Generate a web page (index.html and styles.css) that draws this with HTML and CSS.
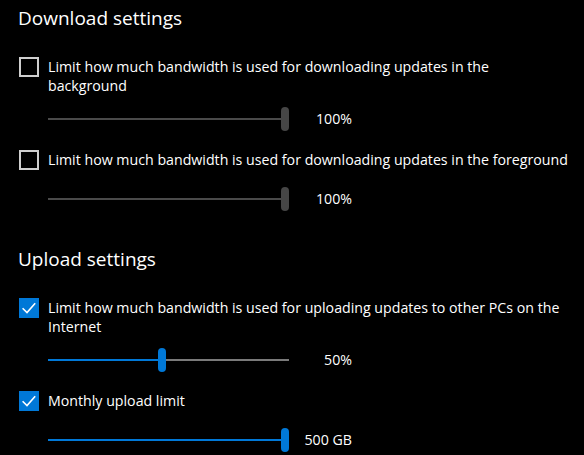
FILE: index.html
```html
<!DOCTYPE html>
<html lang="en">
<head>
<meta charset="utf-8">
<title>Delivery Optimization - Advanced options</title>
<link rel="stylesheet" href="styles.css">
</head>
<body>
<main class="page">
  <section class="section">
    <h2 class="heading">Download settings</h2>

    <label class="check-row">
      <span class="box"></span>
      <span class="check-text">Limit how much bandwidth is used for downloading updates in the<br>background</span>
    </label>
    <div class="slider-row">
      <div class="slider disabled">
        <div class="track"></div>
        <div class="thumb" style="left:233px"></div>
      </div>
      <span class="value">100%</span>
    </div>

    <label class="check-row">
      <span class="box"></span>
      <span class="check-text">Limit how much bandwidth is used for downloading updates in the foreground</span>
    </label>
    <div class="slider-row">
      <div class="slider disabled">
        <div class="track"></div>
        <div class="thumb" style="left:233px"></div>
      </div>
      <span class="value">100%</span>
    </div>
  </section>

  <section class="section">
    <h2 class="heading">Upload settings</h2>

    <label class="check-row">
      <span class="box checked">
        <svg viewBox="0 0 20 20" width="20" height="20"><path d="M3.6 10.2 L8 14.6 L16.2 5.2" fill="none" stroke="#fff" stroke-width="1.6"/></svg>
      </span>
      <span class="check-text">Limit how much bandwidth is used for uploading updates to other PCs on the<br>Internet</span>
    </label>
    <div class="slider-row">
      <div class="slider">
        <div class="track"></div>
        <div class="fill" style="width:114px"></div>
        <div class="thumb" style="left:110px"></div>
      </div>
      <span class="value">50%</span>
    </div>

    <label class="check-row">
      <span class="box checked">
        <svg viewBox="0 0 20 20" width="20" height="20"><path d="M3.6 10.2 L8 14.6 L16.2 5.2" fill="none" stroke="#fff" stroke-width="1.6"/></svg>
      </span>
      <span class="check-text">Monthly upload limit</span>
    </label>
    <div class="slider-row">
      <div class="slider">
        <div class="track"></div>
        <div class="fill" style="width:237px"></div>
        <div class="thumb" style="left:233px"></div>
      </div>
      <span class="value">500 GB</span>
    </div>
  </section>
</main>
</body>
</html>
```

FILE: styles.css
```css
html, body {
  margin: 0;
  padding: 0;
  background: #000;
  color: #fff;
  font-family: "Open Sans", "Noto Sans", "Liberation Sans", sans-serif;
}

.page {
  padding: 4px 0 0 18px;
  display: flex;
  flex-direction: column;
}

.section {
  display: flex;
  flex-direction: column;
}

.section + .section {
  margin-top: 34px;
}

.heading {
  margin: 0 0 25px 0;
  font-size: 19px;
  line-height: 28px;
  font-weight: 400;
}

.check-row {
  display: flex;
  align-items: flex-start;
  gap: 9px;
  min-height: 37px;
  padding-bottom: 12px;
  box-sizing: border-box;
  padding-left: 1px;
}

.box {
  flex: none;
  width: 20px;
  height: 20px;
  box-sizing: border-box;
  border: 2px solid #cfcfcf;
  display: flex;
  align-items: center;
  justify-content: center;
}

.box.checked {
  border: none;
  background: #0078d7;
}

.box svg {
  display: block;
}

.check-text {
  font-size: 14.2px;
  line-height: 19px;
  white-space: nowrap;
}

.slider-row {
  display: flex;
  align-items: center;
  height: 24px;
  margin-left: 30px;
  margin-bottom: 19px;
}

.section .slider-row:last-child {
  margin-bottom: 0;
}

.slider {
  position: relative;
  width: 241px;
  height: 24px;
  flex: none;
}

.track {
  position: absolute;
  left: 0;
  right: 0;
  top: 11px;
  height: 2px;
  background: #7a7a7a;
}

.fill {
  position: absolute;
  left: 0;
  top: 11px;
  height: 2px;
  background: #0078d7;
}

.thumb {
  position: absolute;
  top: 0;
  width: 8px;
  height: 24px;
  border-radius: 4px;
  background: #0078d7;
}

.slider.disabled .track {
  right: 4px;
  background: #4a4a4a;
}

.slider.disabled .thumb {
  background: #464646;
}

.value {
  width: 63px;
  text-align: right;
  font-size: 14.2px;
  line-height: 24px;
}
```
